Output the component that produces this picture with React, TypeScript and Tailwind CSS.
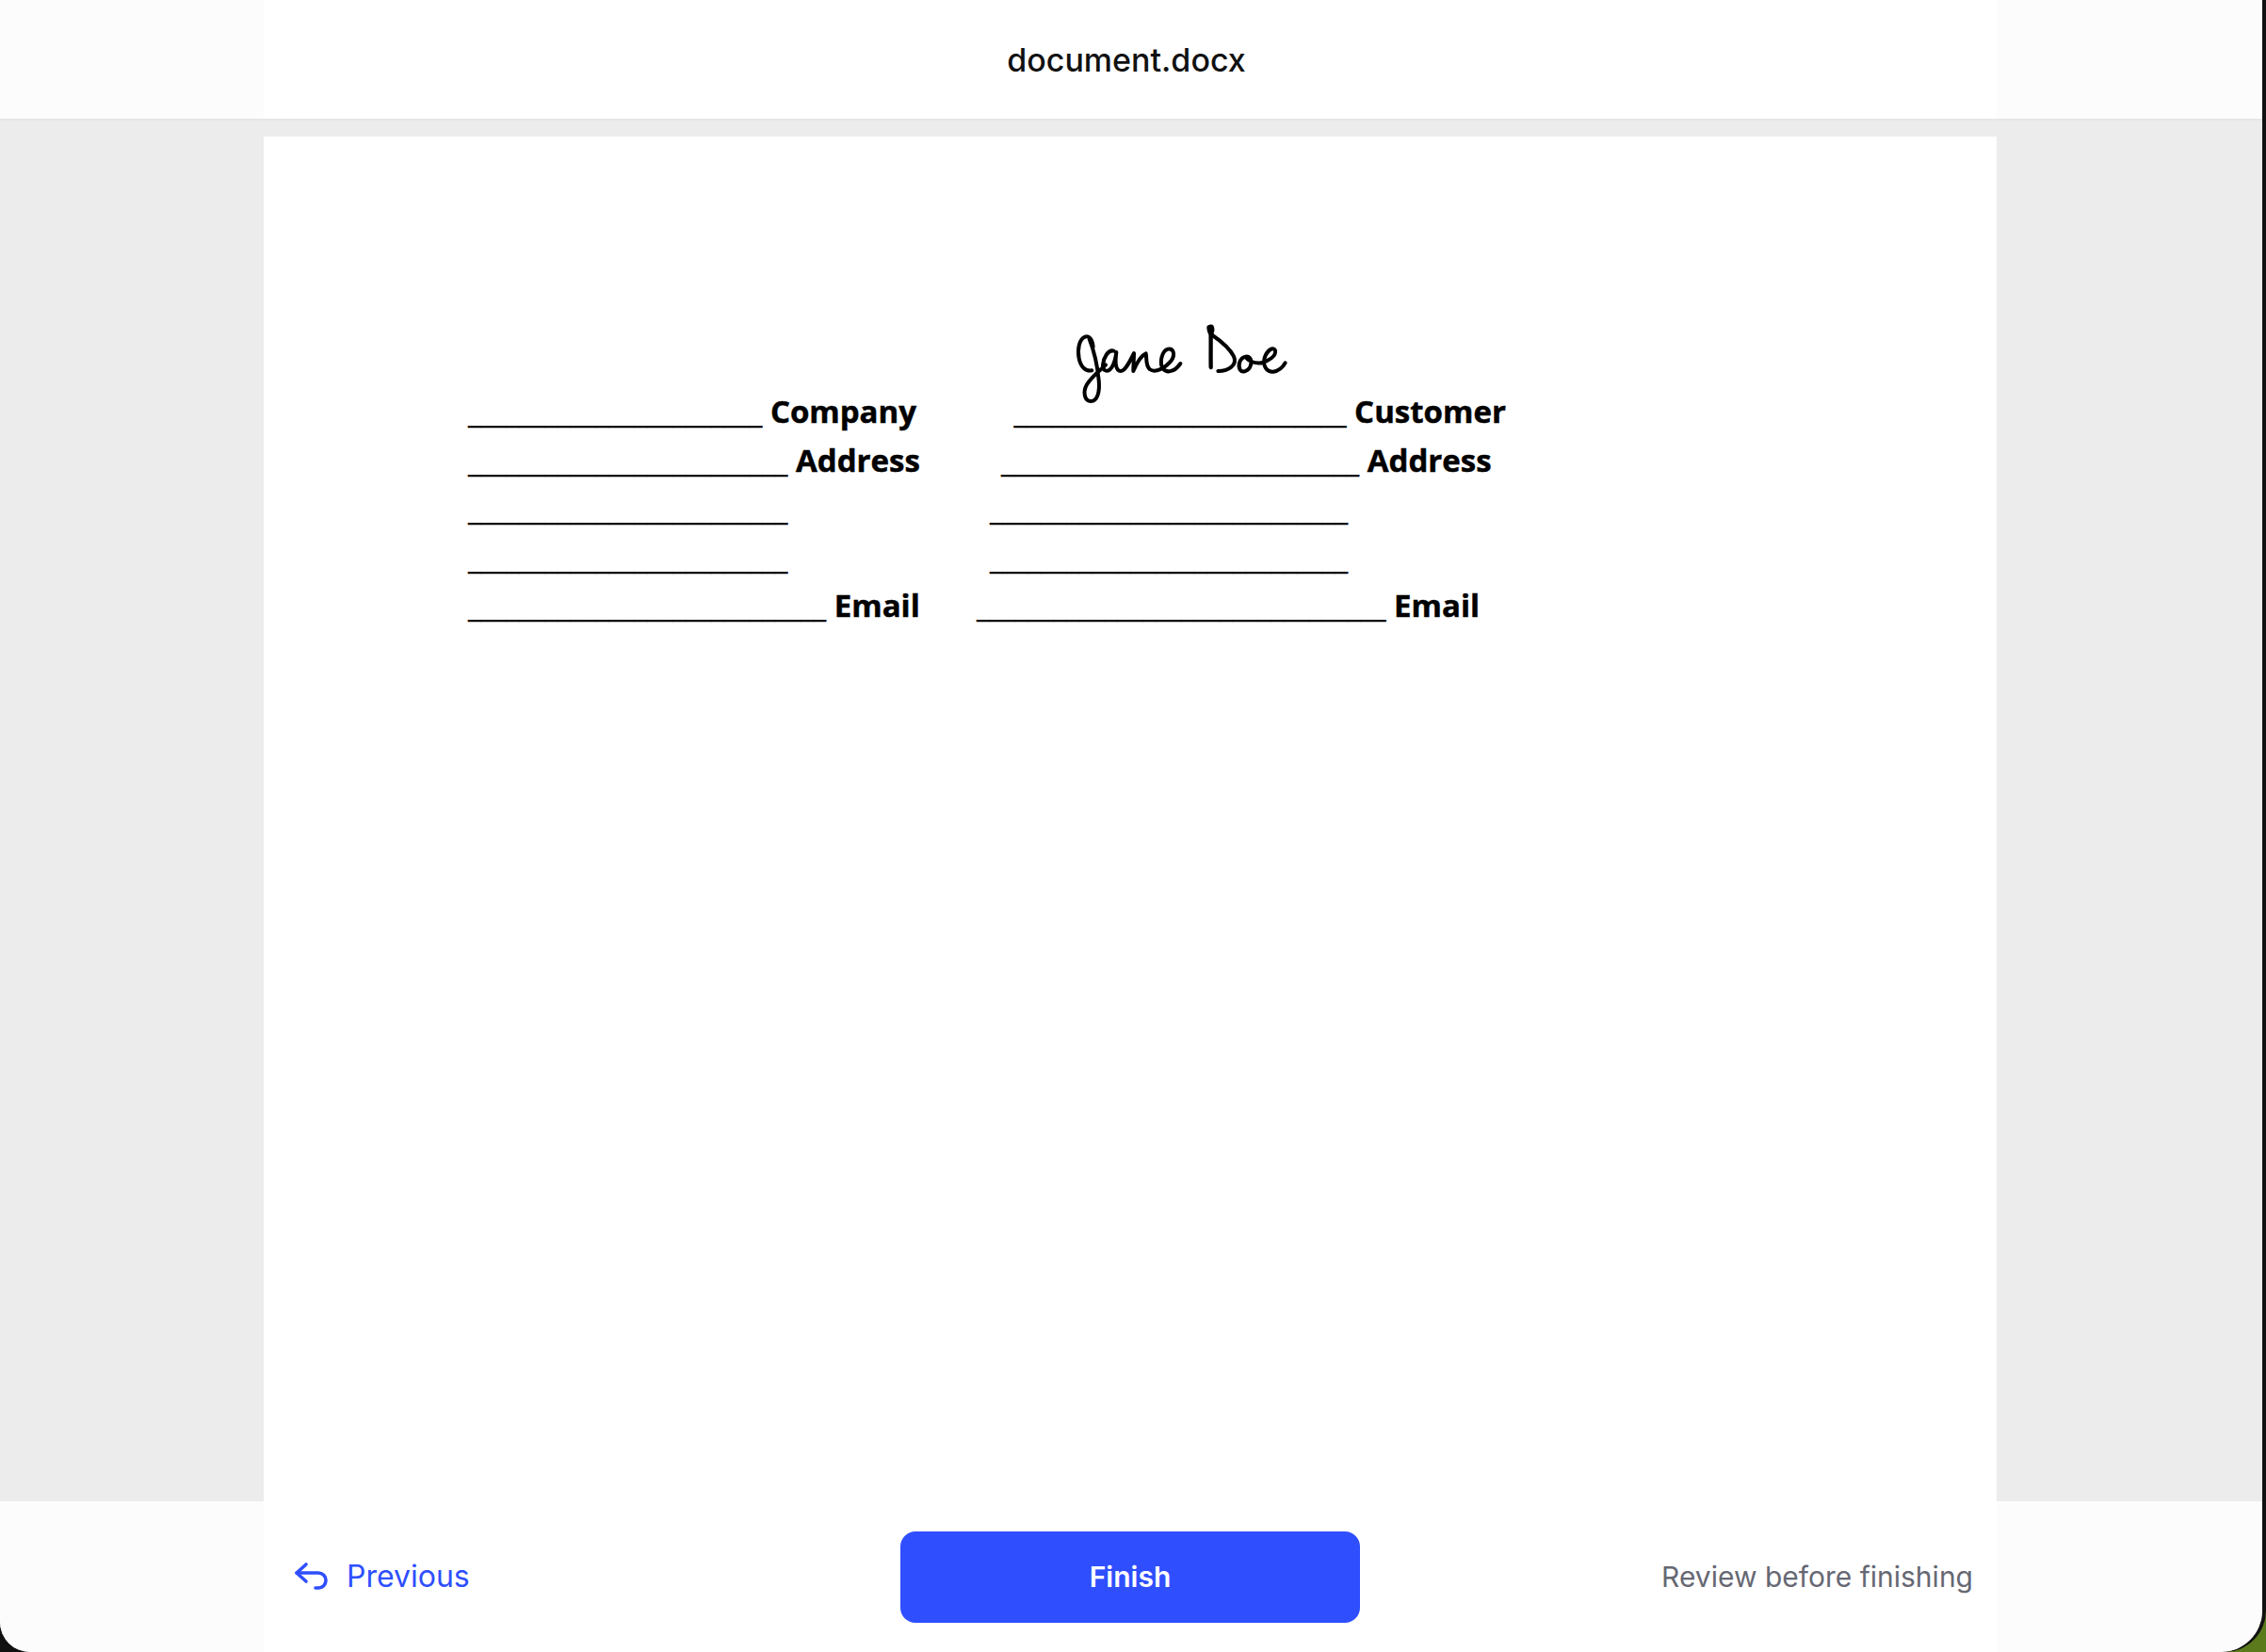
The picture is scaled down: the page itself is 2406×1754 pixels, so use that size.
const rows = [
  { left: 23, leftLabel: 'Company', indent: 'pl-[39.5px]', right: 26, rightLabel: 'Customer' },
  { left: 25, leftLabel: 'Address', indent: 'pl-[26px]', right: 28, rightLabel: 'Address' },
  { left: 25, leftLabel: '', indent: 'pl-[14px]', right: 28, rightLabel: '' },
  { left: 25, leftLabel: '', indent: 'pl-[14px]', right: 28, rightLabel: '' },
  { left: 28, leftLabel: 'Email', indent: 'pl-0', right: 32, rightLabel: 'Email' },
];

function Signature() {
  return (
    <svg viewBox="0 0 1500 480" className="absolute left-[720px] top-[155px] w-[500px] h-[160px]" fill="none" stroke="#000" strokeWidth="12" strokeLinecap="round" strokeLinejoin="round">
      <path d="M482 205 C480 182 470 168 456 173 C438 180 431 212 437 242 C442 268 458 284 478 280 M470 180 C482 210 495 260 500 310 C504 350 495 378 475 378 C455 378 448 350 462 325 C478 298 505 280 522 262" />
      <path d="M548 218 C530 212 515 240 513 262 C512 282 528 288 540 272 C550 258 554 238 556 222 C552 250 552 282 570 282 C585 282 598 252 612 225 C612 245 610 265 610 282 C620 258 636 232 650 226 C654 245 648 262 662 276 C680 290 712 272 730 250 C745 230 738 208 720 212 C700 218 692 258 705 275 C720 292 745 280 760 258" />
      <path d="M856 140 C858 180 856 230 857 270" strokeWidth="13" />
      <path d="M850 142 C850 152 853 160 857 165 C862 158 864 148 860 140 Z" fill="#000" />
      <path d="M858 165 C880 180 915 205 930 235 C942 262 915 282 880 282" />
      <path d="M968 236 C950 238 942 262 950 278 C960 290 982 280 985 258 C987 242 978 234 968 236 C975 250 995 258 1018 256" />
      <path d="M1018 256 C1040 250 1066 235 1062 216 C1056 202 1036 216 1028 240 C1022 265 1034 285 1056 284 C1072 282 1086 270 1094 256" />
    </svg>
  );
}

export default function App() {
  return (
    <div className="relative w-full h-screen bg-[#080808] overflow-hidden font-['Inter',sans-serif]">
      <div className="absolute bottom-0 right-0 w-[50px] h-[50px] bg-[#5a7a1c]" />
      <div className="relative h-full bg-[#111] rounded-br-[44px]">
        <div className="flex flex-col h-full mr-[4px] rounded-bl-[32px] rounded-br-[44px] overflow-hidden bg-[#ececec]">
          <header className="flex h-[128px] shrink-0 border-b-2 border-[#e6e6e6] bg-[#fcfcfc]">
            <div className="w-[280px] shrink-0" />
            <div className="flex-1 flex items-center justify-center bg-white pr-[8px] pt-[1px]">
              <span className="text-[34px] font-medium text-[#111]">document.docx</span>
            </div>
            <div className="w-[282px] shrink-0" />
          </header>

          <main className="flex-1 min-h-0 flex pt-[17px]">
            <div className="w-[280px] shrink-0" />
            <div className="relative flex-1 bg-white pt-[267px] pl-[217px] font-['Open_Sans',sans-serif] text-[31px] text-black [-webkit-text-stroke:0.5px_#000]">
              <Signature />
              {rows.map((row, i) => (
                <div key={i} className="flex h-[51.5px] items-end leading-[51.5px] whitespace-nowrap">
                  <div className="w-[540px] shrink-0">
                    {'_'.repeat(row.left)}
                    {row.leftLabel && <span className="font-bold text-[33px]"> {row.leftLabel}</span>}
                  </div>
                  <div className={row.indent}>
                    {'_'.repeat(row.right)}
                    {row.rightLabel && <span className="font-bold text-[33px]"> {row.rightLabel}</span>}
                  </div>
                </div>
              ))}
            </div>
            <div className="w-[282px] shrink-0" />
          </main>

          <footer className="flex h-[160px] shrink-0 bg-[#fcfcfc]">
            <div className="w-[280px] shrink-0" />
            <div className="flex-1 grid grid-cols-[1fr_488px_1fr] items-center bg-white px-[25px]">
              <button className="ml-[7px] flex items-center gap-[16px] text-[32px] text-[#2f4fff]">
                <svg viewBox="0 0 40 40" className="w-[40px] h-[40px]" fill="none" stroke="currentColor" strokeWidth="3.6" strokeLinecap="round" strokeLinejoin="round">
                  <path d="M13 7 3 16l10 9" />
                  <path d="M3 16h23a8 8 0 0 1 0 16h-3" />
                </svg>
                Previous
              </button>
              <button className="h-[97px] rounded-[16px] bg-[#2f4fff] text-white text-[30px] font-semibold">Finish</button>
              <span className="justify-self-end text-[30px] text-[#666873]">Review before finishing</span>
            </div>
            <div className="w-[282px] shrink-0" />
          </footer>
        </div>
      </div>
    </div>
  );
}
